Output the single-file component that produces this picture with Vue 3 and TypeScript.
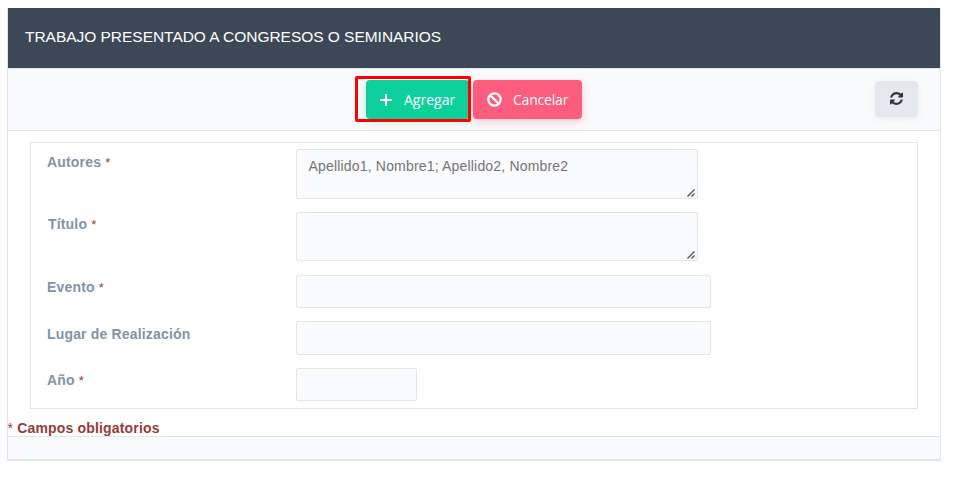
<script setup lang="ts">
import { ref } from 'vue'

interface Field {
  id: string
  label: string
  required: boolean
  kind: 'area' | 'text'
  size: string
  placeholder?: string
}

const fields: Field[] = [
  { id: 'autores', label: 'Autores', required: true, kind: 'area', size: 'tall', placeholder: 'Apellido1, Nombre1; Apellido2, Nombre2' },
  { id: 'titulo', label: 'Título', required: true, kind: 'area', size: 'medium' },
  { id: 'evento', label: 'Evento', required: true, kind: 'text', size: 'wide' },
  { id: 'lugar', label: 'Lugar de Realización', required: false, kind: 'text', size: 'wide place' },
  { id: 'anio', label: 'Año', required: true, kind: 'text', size: 'short' },
]

const values = ref<Record<string, string>>({})
</script>

<template>
  <form class="card" @submit.prevent>
    <header class="title">TRABAJO PRESENTADO A CONGRESOS O SEMINARIOS</header>

    <div class="toolbar">
      <div class="actions">
        <button type="submit" class="btn add">
          <svg class="plus" viewBox="0 0 12 12"><path d="M6 0V12M0 6H12" /></svg>
          <span class="caption">Agregar</span>
          <span class="highlight"></span>
        </button>
        <button type="button" class="btn cancel">
          <svg class="ban" viewBox="0 0 15 15"><circle cx="7.5" cy="7.5" r="6.2" /><path d="M3.2 3.2L11.8 11.8" /></svg>
          <span class="caption cancel-caption">Cancelar</span>
        </button>
      </div>
      <button type="button" class="refresh" aria-label="Actualizar">
        <svg viewBox="0 0 1536 1536"><path d="M1511 928q0 5-1 7-64 268-268 434.500T764 1536q-146 0-282.500-55T238 1324l-129 129q-19 19-45 19t-45-19-19-45V960q0-26 19-45t45-19h448q26 0 45 19t19 45-19 45l-137 137q71 66 161 102t187 36q134 0 250-65t186-179q11-17 53-117 8-23 30-23h192q13 0 22.500 9.500t9.500 22.500zm25-800v448q0 26-19 45t-45 19h-448q-26 0-45-19t-19-45 19-45l138-138Q969 256 768 256q-134 0-250 65T332 500q-11 17-53 117-8 23-30 23H50q-13 0-22.500-9.500T18 608v-7q65-268 270-434.500T768 0q146 0 284 55.500T1297 212l130-129q19-19 45-19t45 19 19 45z" /></svg>
      </button>
    </div>

    <section class="fields">
      <div v-for="field in fields" :key="field.id" class="row" :class="field.id">
        <label :for="field.id">{{ field.label }} <span v-if="field.required" class="star">*</span></label>
        <div v-if="field.kind === 'area'" class="area" :class="field.size">
          <textarea :id="field.id" v-model="values[field.id]" :placeholder="field.placeholder"></textarea>
          <svg class="grip" viewBox="0 0 9 9"><path d="M0.5 8.5L8.5 0.5M5 8.5L8.5 5" /></svg>
        </div>
        <input v-else :id="field.id" v-model="values[field.id]" type="text" :class="field.size" />
      </div>
    </section>

    <p class="note"><span class="note-star">*</span> Campos obligatorios</p>
    <footer></footer>
  </form>
</template>

<style>
body {
  background: #fff;
}
</style>

<style scoped>
* {
  box-sizing: border-box;
}
.card {
  width: 934px;
  height: 453px;
  margin: 8px 0 0 7px;
  border: solid #e0e6ed;
  border-width: 0 1px 2px;
  font-family: "Liberation Sans", Arial, sans-serif;
  display: flex;
  flex-direction: column;
}
.title {
  height: 60px;
  flex: none;
  padding-left: 17px;
  background: #3d4857;
  color: #fff;
  font-size: 15.5px;
  line-height: 58px;
  letter-spacing: -0.03px;
  white-space: nowrap;
}
.toolbar {
  height: 63px;
  flex: none;
  border: solid #e0e6ed;
  border-width: 1px 0;
  background: #f9fafc;
  display: flex;
  justify-content: space-between;
  padding: 11px 22px 0 358px;
}
.actions {
  display: flex;
  gap: 4px;
}
button {
  border: 0;
  padding: 0;
  display: flex;
  align-items: center;
}
.btn {
  position: relative;
  height: 39px;
  border-radius: 4px;
  color: #fff;
  font: 14px/20px "Open Sans", "Noto Sans", sans-serif;
}
.add {
  width: 103px;
  padding-left: 14px;
  background: #0dd09a;
  box-shadow: 0 3px 8px rgba(13, 208, 154, 0.25);
}
.cancel {
  width: 109px;
  padding-left: 14px;
  background: #fc5c7d;
  box-shadow: 0 3px 8px rgba(252, 92, 125, 0.3);
}
.plus {
  width: 12px;
  height: 12px;
  margin-right: 12px;
}
.ban {
  width: 15px;
  height: 15px;
  margin-right: 11px;
}
.plus path,
.ban path,
.ban circle {
  fill: none;
  stroke: #fff;
  stroke-width: 2;
}
.ban path,
.ban circle {
  stroke-width: 2.3;
}
.caption {
  padding-top: 1px;
}
.cancel-caption {
  letter-spacing: -0.2px;
}
.highlight {
  position: absolute;
  left: -11px;
  top: -4px;
  width: 116px;
  height: 46px;
  border: 3px solid #f00;
  border-radius: 2px;
  z-index: 2;
}
.refresh {
  width: 43px;
  height: 36px;
  margin-top: 1px;
  border-radius: 4px;
  background: #e3e9ef;
  box-shadow: 0 2px 6px rgba(120, 140, 160, 0.12);
  justify-content: center;
}
.refresh svg {
  width: 13px;
  height: 13px;
  margin-bottom: 1px;
  fill: #2d353e;
}
.fields {
  width: 888px;
  height: 267px;
  flex: none;
  margin: 11px 0 0 22px;
  border: 1px solid #e0e6ed;
  padding: 6px 0 0 16px;
  display: grid;
  grid-template-rows: 63px 63px 46px 47px 33px;
}
.row {
  display: grid;
  grid-template-columns: 249px 1fr;
  align-items: start;
}
label {
  color: #8492a6;
  font-size: 14px;
  font-weight: bold;
  line-height: 16px;
  letter-spacing: 0.17px;
  padding-top: 5px;
  white-space: nowrap;
}
.titulo label {
  padding: 4px 0 0 1px;
}
.evento label,
.anio label {
  padding-top: 4px;
}
.star {
  color: #953b39;
  font-size: 13px;
  font-weight: normal;
}
.area {
  position: relative;
  width: 402px;
}
.tall {
  height: 50px;
}
.medium {
  height: 49px;
}
textarea,
input {
  display: block;
  margin: 0;
  border: 1px solid #e0e6ed;
  border-radius: 2px;
  background: #f9fafc;
  color: #3c4858;
  font: 14px/18px "Liberation Sans", Arial, sans-serif;
  outline: 0;
}
textarea {
  width: 100%;
  height: 100%;
  padding: 7px 11.5px;
  letter-spacing: 0.18px;
  resize: none;
  overflow: hidden;
}
textarea::placeholder {
  color: #757575;
}
input {
  height: 33px;
  padding: 0 12px;
}
.wide {
  width: 415px;
}
.place {
  height: 34px;
}
.short {
  width: 121px;
}
.grip {
  position: absolute;
  right: 3px;
  bottom: 2px;
  width: 8px;
  height: 8px;
}
.grip path {
  fill: none;
  stroke: #505050;
  stroke-width: 1.5;
}
.note {
  flex: none;
  height: 27px;
  margin: 0 0 0 -0.5px;
  padding-top: 11px;
  color: #953b39;
  font-size: 14px;
  font-weight: bold;
  line-height: 16px;
  letter-spacing: 0.17px;
}
.note-star {
  font-weight: normal;
}
footer {
  flex: 1;
  border-top: 1px solid #e0e6ed;
  background: #f9fafc;
}
</style>
